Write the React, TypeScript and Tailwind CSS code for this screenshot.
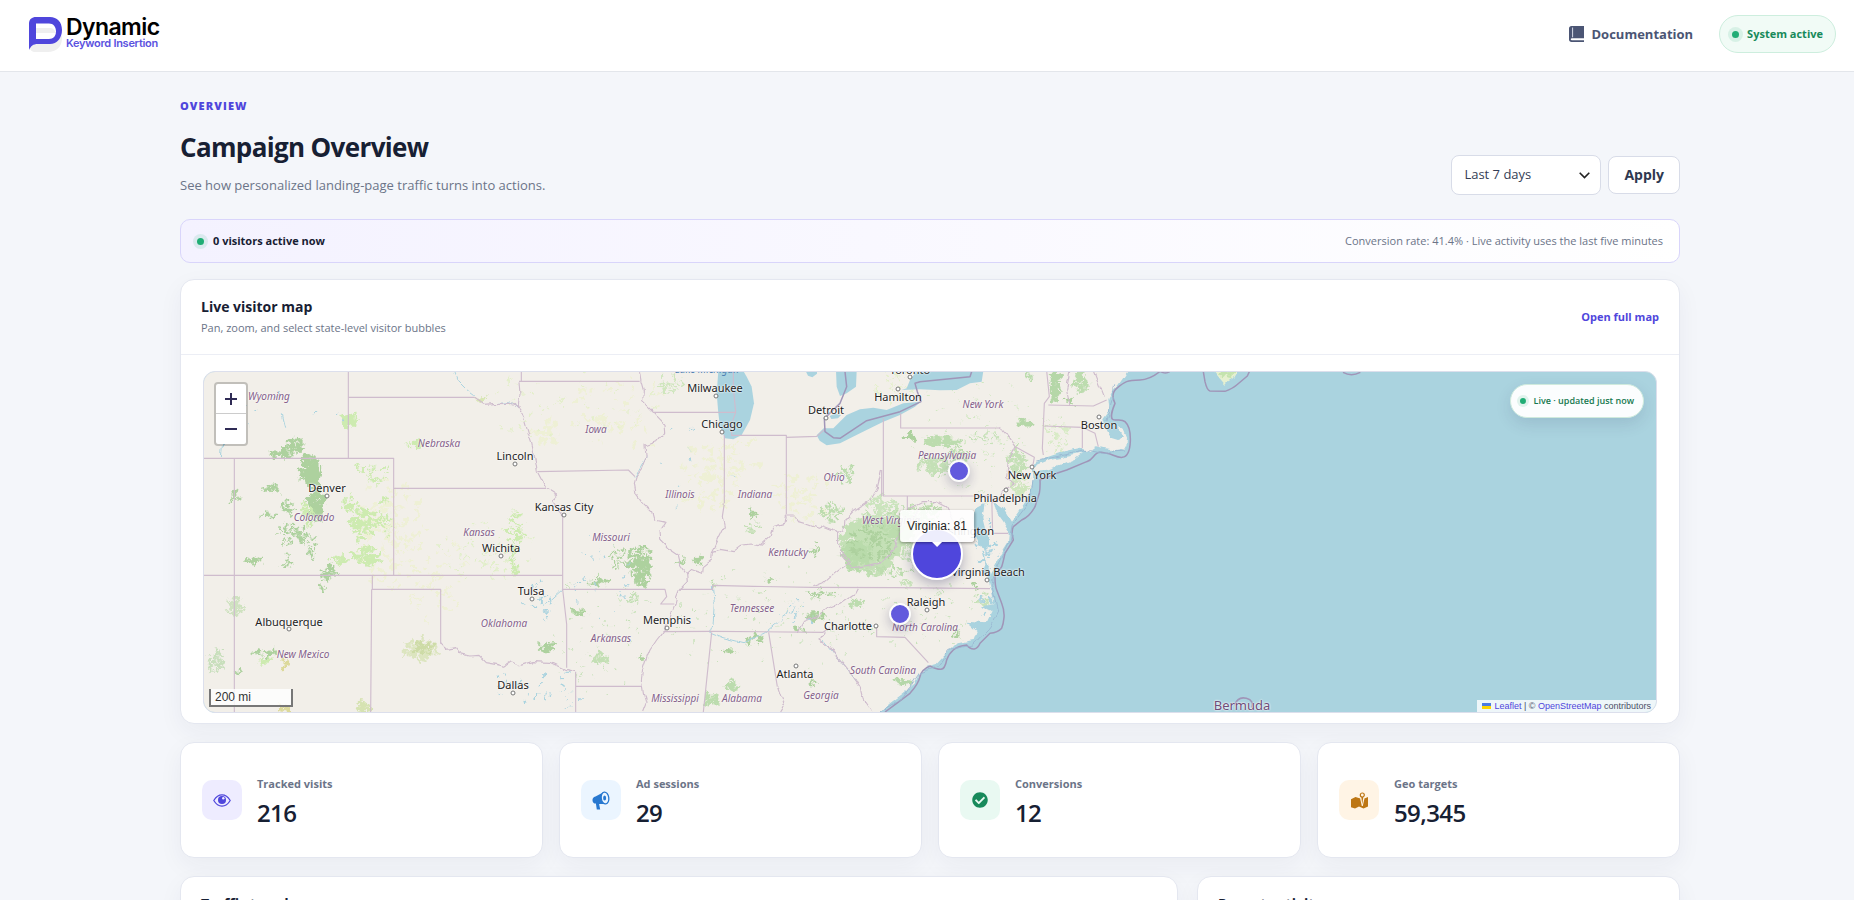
import React, { useState } from 'react';
import { FaCheckCircle } from 'react-icons/fa';

const MAP_WIDTH = 1454;
const MAP_HEIGHT = 342;

const cities = [
  { name: 'Milwaukee', x: 512, y: 17, dx: 513, dy: 25 },
  { name: 'Chicago', x: 519, y: 53, dx: 519, dy: 61 },
  { name: 'Detroit', x: 623, y: 39, dx: 623, dy: 47 },
  { name: 'Hamilton', x: 695, y: 26, dx: 695, dy: 18 },
  { name: 'Toronto', x: 707, y: -1, dx: 707, dy: 6 },
  { name: 'Boston', x: 896, y: 54, dx: 896, dy: 46 },
  { name: 'New York', x: 829, y: 104, dx: 829, dy: 96 },
  { name: 'Philadelphia', x: 802, y: 127, dx: 803, dy: 119 },
  { name: 'Washington', x: 760, y: 160, dx: 759, dy: 149 },
  { name: 'Virginia Beach', x: 785, y: 201, dx: 784, dy: 209 },
  { name: 'Raleigh', x: 723, y: 231, dx: 724, dy: 239 },
  { name: 'Charlotte', x: 645, y: 255, dx: 673, dy: 255 },
  { name: 'Atlanta', x: 592, y: 303, dx: 593, dy: 295 },
  { name: 'Memphis', x: 464, y: 249, dx: 464, dy: 257 },
  { name: 'Dallas', x: 310, y: 314, dx: 310, dy: 322 },
  { name: 'Tulsa', x: 328, y: 220, dx: 329, dy: 228 },
  { name: 'Wichita', x: 298, y: 177, dx: 298, dy: 185 },
  { name: 'Kansas City', x: 361, y: 136, dx: 361, dy: 144 },
  { name: 'Lincoln', x: 312, y: 85, dx: 312, dy: 93 },
  { name: 'Denver', x: 124, y: 117, dx: 124, dy: 125 },
  { name: 'Albuquerque', x: 86, y: 251, dx: 86, dy: 258 },
];

const states = [
  { name: 'Wyoming', x: 66, y: 25 },
  { name: 'Nebraska', x: 236, y: 72 },
  { name: 'Colorado', x: 111, y: 146 },
  { name: 'Kansas', x: 276, y: 161 },
  { name: 'Oklahoma', x: 301, y: 252 },
  { name: 'New Mexico', x: 100, y: 283 },
  { name: 'Iowa', x: 393, y: 58 },
  { name: 'Illinois', x: 477, y: 123 },
  { name: 'Indiana', x: 552, y: 123 },
  { name: 'Ohio', x: 631, y: 106 },
  { name: 'Missouri', x: 408, y: 166 },
  { name: 'Kentucky', x: 585, y: 181 },
  { name: 'Tennessee', x: 549, y: 237 },
  { name: 'Arkansas', x: 408, y: 267 },
  { name: 'Mississippi', x: 472, y: 327 },
  { name: 'Alabama', x: 539, y: 327 },
  { name: 'Georgia', x: 618, y: 324 },
  { name: 'South Carolina', x: 680, y: 299 },
  { name: 'North Carolina', x: 722, y: 256 },
  { name: 'West Virginia', x: 688, y: 149 },
  { name: 'Pennsylvania', x: 744, y: 84 },
  { name: 'New York', x: 780, y: 33 },
];

const markers = [
  { name: 'Virginia', visits: 81, x: 734, y: 183, size: 52, opacity: 1 },
  { name: 'Pennsylvania', visits: 9, x: 756, y: 100, size: 22, opacity: 0.88 },
  { name: 'North Carolina', visits: 8, x: 697, y: 243, size: 22, opacity: 0.88 },
];

const FOREST = '#add19e';
const GRASS = '#cdebb0';
const FARM = '#eef0d5';
const WATER = '#aad3df';

// [cx, cy, rx, ry, count, grain, color], in thirds of a map pixel
type Patch = [number, number, number, number, number, number, string];

const patches: Patch[] = [
  // farmland
  [560, 480, 110, 180, 120, 7, FARM],
  [700, 620, 100, 130, 50, 6, FARM],
  [1250, 130, 150, 120, 40, 7, FARM],
  [1040, 180, 50, 60, 16, 9, FARM],
  [1520, 320, 90, 110, 60, 8, FARM],
  [1800, 380, 90, 80, 40, 7, FARM],
  [1600, 250, 80, 60, 26, 7, FARM],
  [850, 540, 150, 90, 60, 4, '#e0efc8'],
  // mountains, west
  [278, 225, 18, 22, 30, 7, FOREST],
  [240, 245, 34, 14, 26, 6, FOREST],
  [320, 300, 30, 50, 70, 8, FOREST],
  [340, 400, 30, 50, 60, 8, FOREST],
  [205, 355, 30, 14, 20, 5, FOREST],
  [255, 410, 16, 22, 20, 5, FOREST],
  [190, 435, 26, 10, 14, 5, FOREST],
  [270, 490, 56, 30, 40, 5, FOREST],
  [330, 525, 16, 40, 20, 4, FOREST],
  [155, 568, 24, 10, 18, 5, FOREST],
  [255, 570, 22, 16, 14, 4, FOREST],
  [380, 605, 22, 26, 30, 6, FOREST],
  [360, 650, 10, 26, 14, 4, FOREST],
  [100, 372, 18, 16, 16, 5, FOREST],
  [190, 846, 32, 12, 26, 6, FOREST],
  [180, 870, 28, 10, 16, 6, GRASS],
  [40, 870, 30, 34, 36, 6, '#c8dfbc'],
  [108, 900, 6, 10, 6, 5, FOREST],
  [98, 710, 22, 32, 34, 6, '#cfe2c0'],
  [442, 145, 22, 20, 36, 8, GRASS],
  [500, 290, 60, 20, 24, 4, GRASS],
  [525, 320, 34, 26, 24, 4, GRASS],
  [480, 460, 44, 46, 46, 8, GRASS],
  [440, 400, 40, 30, 20, 5, GRASS],
  [490, 560, 40, 30, 50, 7, GRASS],
  [410, 565, 24, 16, 22, 6, GRASS],
  [545, 440, 34, 60, 30, 5, GRASS],
  [310, 430, 20, 40, 18, 6, GRASS],
  [636, 218, 26, 10, 20, 5, GRASS],
  [940, 480, 26, 60, 40, 5, GRASS],
  [930, 570, 16, 36, 18, 5, GRASS],
  [840, 84, 24, 8, 18, 5, '#d8e6b4'],
  [655, 840, 50, 32, 60, 6, '#dce5bf'],
  [660, 830, 26, 20, 30, 5, '#cddba6'],
  [478, 1008, 22, 18, 24, 6, '#d6e3b2'],
  [245, 1012, 24, 8, 14, 5, '#dcd99a'],
  [244, 886, 6, 16, 12, 5, '#dcd99a'],
  [1030, 828, 26, 20, 30, 5, FOREST],
  [1124, 722, 14, 10, 12, 5, FOREST],
  // Ozarks and the lower Mississippi
  [1310, 570, 40, 50, 80, 6, FOREST],
  [1245, 560, 26, 44, 26, 4, FOREST],
  [1315, 622, 24, 24, 30, 6, FOREST],
  [1190, 632, 40, 14, 20, 5, FOREST],
  [1128, 724, 16, 8, 14, 5, FOREST],
  [1192, 865, 26, 20, 28, 5, '#c3dfb4'],
  [1290, 680, 12, 18, 12, 4, '#c3dfb4'],
  [1318, 855, 6, 12, 8, 5, FOREST],
  [1486, 572, 24, 14, 16, 5, FOREST],
  [1435, 575, 14, 20, 10, 4, FOREST],
  [1400, 40, 44, 26, 24, 5, '#cfe6bd'],
  [1650, 425, 12, 20, 16, 5, FOREST],
  [1660, 470, 36, 24, 12, 4, '#c3dfb4'],
  [1885, 420, 44, 24, 40, 5, '#bcdcae'],
  [1930, 310, 26, 26, 16, 6, '#bcdcae'],
  [1578, 838, 12, 7, 14, 5, FOREST],
  [1655, 802, 26, 20, 26, 5, FOREST],
  [1585, 945, 26, 20, 28, 6, '#bcdcae'],
  [1525, 985, 26, 20, 28, 6, '#bcdcae'],
  [1828, 936, 12, 14, 10, 5, FOREST],
  [1840, 735, 30, 8, 24, 5, FOREST],
  [1850, 670, 60, 12, 22, 4, FOREST],
  [1800, 780, 26, 16, 12, 4, FOREST],
  [1700, 630, 8, 6, 8, 5, FOREST],
  [1836, 540, 14, 24, 12, 4, FOREST],
  [1530, 645, 6, 22, 12, 4, '#bcdcae'],
  // Appalachians and the northeast
  [2010, 520, 86, 84, 260, 12, '#c4e0b6'],
  [1960, 555, 40, 44, 70, 8, '#b9dbab'],
  [2010, 500, 80, 70, 70, 6, FOREST],
  [2100, 460, 60, 40, 70, 9, '#bcdcae'],
  [2040, 410, 50, 36, 36, 7, '#cbe4bd'],
  [2160, 425, 54, 26, 44, 6, '#bcdcae'],
  [2215, 213, 54, 14, 50, 7, '#bcdcae'],
  [2195, 280, 50, 30, 56, 7, '#c4e0b6'],
  [2270, 255, 40, 24, 30, 5, '#bcdcae'],
  [2340, 200, 46, 18, 20, 4, '#c8e2ba'],
  [2125, 200, 14, 12, 14, 6, FOREST],
  [2445, 270, 30, 42, 50, 6, '#c4e0b6'],
  [2464, 156, 18, 12, 22, 7, '#b5d7a8'],
  [2555, 50, 16, 46, 40, 7, '#b5d7a8'],
  [2630, 30, 20, 40, 34, 6, '#bcdcae'],
  [2598, 90, 16, 12, 12, 5, FOREST],
  [2472, 8, 12, 22, 14, 5, '#bcdcae'],
  [2560, 200, 46, 50, 34, 4, '#d8ebc6'],
  [2450, 350, 26, 26, 36, 6, '#cfe6bd'],
  [2120, 530, 24, 60, 34, 6, '#c8e2ba'],
  [2060, 600, 80, 16, 30, 5, '#bcdcae'],
  [1966, 695, 26, 16, 26, 6, '#bcdcae'],
  [2110, 640, 30, 16, 12, 4, '#c8e2ba'],
  [2318, 645, 8, 14, 10, 4, FOREST],
  [2340, 680, 22, 20, 14, 5, '#c8e2ba'],
  [2100, 930, 20, 12, 20, 6, '#b5d7a8'],
  [2258, 790, 10, 12, 10, 5, FOREST],
  [2350, 200, 250, 200, 110, 3, '#d0e8c0'],
  [2150, 720, 180, 120, 60, 3, '#c8e2ba'],
  [1700, 760, 300, 180, 90, 3, '#c8e2ba'],
  [1200, 780, 160, 200, 60, 3, '#c8e2ba'],
  [1100, 100, 280, 110, 50, 4, '#e4efcb'],
  [2080, 50, 60, 50, 30, 5, '#e4efcb'],
  // reservoirs
  [1000, 690, 44, 80, 16, 4, WATER],
  [950, 940, 110, 60, 20, 4, WATER],
  [1080, 960, 60, 60, 12, 3, WATER],
  [1250, 660, 160, 120, 14, 3, WATER],
  [1170, 530, 60, 40, 8, 3, WATER],
  [1780, 720, 60, 40, 14, 3, WATER],
  [2380, 700, 60, 50, 30, 5, WATER],
  [2350, 530, 40, 90, 30, 5, WATER],
  [1500, 300, 200, 200, 10, 3, WATER],
  [300, 130, 200, 80, 8, 4, WATER],
];

const stateLines = [
  // plains
  'M436 0V262M436 79H815M955 31V0M948 31H1310',
  'M0 262H572V613M572 352H1029M94 262V1023M0 613H1079M508 613V655H713V818M506 655L503 1023',
  'M1118 902V1023M1119 946H1317M1079 432V655L1091 760V890M1079 655H1386L1391 677 1373 699H1414M1003 302L1276 297 1296 317',
  // midwest
  'M1351 124H1598L1591 47V0M1598 124L1586 157V193H1750V199L1841 196 1869 172M1750 199V429M1564 193V397',
  'M1431 655H1529V643L1651 646 1826 649 2080 650 2361 653M1381 782L1526 781 1860 784 1880 770',
  'M1526 784L1501 1023M1697 784L1723 947M2021 767V797L2106 799 2176 875',
  // east
  'M2041 142V375H2366L2369 487H2416M2093 127V171H2393M2436 227L2494 259 2489 287M2521 252L2518 232 2524 97 2539 77 2531 0',
  'M2524 165L2638 169V232M2638 169L2676 187 2686 227M2536 102L2671 105 2711 87M2036 297V375M2113 375V417',
];

const riverLines = [
  'M815 79L846 100 870 98 920 97 945 106 958 122M948 31L951 69 946 102 961 137 976 187 986 217 999 277 1003 302 1029 352 1061 372 1046 387 1079 432',
  'M713 818L730 835 755 830 770 848 800 855 828 853 850 875 880 880 905 886 925 872 950 884 990 872 1040 874 1085 895 1118 902',
  'M1309 0L1314 32 1321 57 1319 92 1351 124 1383 157 1385 182 1361 212 1326 225 1329 257 1316 292 1301 312 1294 337 1299 367 1321 397 1346 422 1353 447 1386 454 1371 477 1373 507 1396 532 1426 552 1433 582 1451 607 1453 632 1429 657 1421 677 1414 707 1396 757 1381 782 1361 807 1341 837 1329 867 1319 897 1315 927 1321 967 1329 997 1319 1023',
  'M1564 397L1558 437 1564 467 1549 497 1536 527 1528 542 1526 567 1501 587 1499 607 1466 595 1451 609',
  'M1528 542L1551 535 1591 542 1611 527 1641 522 1666 527 1701 497 1711 467 1746 457 1750 432 1771 432 1786 452 1821 462 1846 472 1861 465 1891 477 1901 487 1923 477 1926 447 1951 420 2001 387 2021 357 2036 297',
  'M1901 487V517L1921 547 1941 572 1911 592 1881 617 1861 635 1831 647M1966 647L1956 667 1911 697 1871 712 1841 737 1801 752 1783 784',
  'M1723 947L1743 1007 1733 1023M1861 784L1851 807 1881 827 1901 857 1926 887 1951 917 1971 947 1981 987 2006 1023',
  'M1911 547L1931 572 1951 592 1991 587 2031 577 2071 537 2101 467 2151 417M2113 417L2161 392H2201L2231 407 2251 447 2271 480',
  'M2393 171L2411 192 2436 227 2416 267 2411 317 2436 337 2406 357 2371 392M2601 102L2591 57 2601 0M2701 77L2671 0',
];

// Small fixed generator so that every render draws the same ground cover.
function groundCover([cx, cy, rx, ry, count, grain]: Patch) {
  let seed = cx * 31 + cy * 17 + count;
  const rand = () => {
    seed = (seed * 16807 + 11) % 2147483647;
    return seed / 2147483647;
  };
  rand();
  let d = '';
  for (let i = 0; i < count; i++) {
    const angle = rand() * Math.PI * 2;
    const dist = Math.pow(rand(), 0.7);
    const x = cx + Math.cos(angle) * rx * dist;
    const y = cy + Math.sin(angle) * ry * dist;
    const lean = 0.6 + rand() * 1.1;
    for (let k = 0; k < 7; k++) {
      const a = (k / 7) * Math.PI * 2;
      const r = grain * (0.3 + rand() * 1.3);
      d += `${k ? 'L' : 'M'}${Math.round(x + Math.cos(a) * r * lean)} ${Math.round(y + (Math.sin(a) * r) / lean)}`;
    }
    d += 'Z';
  }
  return d;
}

function BaseMap() {
  return (
    <svg
      className="block"
      width={MAP_WIDTH}
      height={MAP_HEIGHT}
      viewBox={`0 0 ${MAP_WIDTH * 3} ${MAP_HEIGHT * 3}`}
      aria-hidden="true"
    >
      <defs>
        <filter id="ragged" filterUnits="userSpaceOnUse" x="0" y="0" width="4362" height="1026">
          <feTurbulence type="fractalNoise" baseFrequency="0.045" numOctaves="3" seed="4" />
          <feDisplacementMap in="SourceGraphic" scale="34" xChannelSelector="R" yChannelSelector="G" />
        </filter>
        <filter id="meander" filterUnits="userSpaceOnUse" x="-20" y="-20" width="4402" height="1066">
          <feTurbulence type="fractalNoise" baseFrequency="0.035" numOctaves="2" seed="9" />
          <feDisplacementMap in="SourceGraphic" scale="18" xChannelSelector="R" yChannelSelector="G" />
        </filter>
      </defs>

      <rect width={MAP_WIDTH * 3} height={MAP_HEIGHT * 3} fill="#f2efe9" />
      <g filter="url(#ragged)">
        {patches.map((patch, i) => (
          <path key={i} d={groundCover(patch)} fill={patch[6]} />
        ))}
      </g>

      {/* rivers */}
      <g fill="none" stroke={WATER} strokeWidth="3" filter="url(#meander)">
        <path d="M752 0L765 30 790 55 815 74M1528 645L1534 700 1530 760 1520 784 1560 800 1620 815 1680 790 1740 740 1780 710M1296 317L1330 257M870 98L920 95 950 110M1079 655L1040 690 1020 700M60 200L55 260M235 130L245 170M1861 807L1960 930" />
      </g>

      {/* lakes */}
      <g fill={WATER}>
        <path d="M1546 0L1541 67 1546 127 1551 167 1566 202 1591 205 1616 192 1641 147 1653 97 1646 47 1631 17 1621 0Z" />
        <path d="M1808 0L1815 14 1828 19 1842 8V0ZM1899 0L1901 47 1911 75 1931 67 1959 47 1961 0ZM1880 135L1895 128 1914 132 1905 142 1885 144Z" />
        <path d="M1841 193L1862 172 1891 172 1931 132 1971 115 2011 110 2051 117 2101 97 2153 92 2136 107 2091 132 2041 152 1971 187 1911 217 1871 223 1850 209Z" />
        <path d="M2141 0L2121 27 2111 52 2096 57 2151 55 2211 58 2261 57 2301 37 2336 32 2341 0Z" />
      </g>

      {/* Atlantic */}
      <g filter="url(#meander)">
        <path
          fill={WATER}
          d="M4400 -40H2800L2761 20 2746 42 2726 62 2716 82 2719 117 2701 142 2711 177 2726 200 2748 207 2760 196 2752 180 2746 167 2762 176 2772 200 2770 226 2762 240 2740 234 2700 232 2680 226 2660 240 2630 230 2591 239 2531 259 2496 275 2489 292 2491 317 2486 347 2471 387 2441 430 2424 452 2400 412 2371 392 2378 420 2400 450 2418 480 2414 520 2395 550 2380 580 2364 610 2352 575 2340 530 2322 500 2306 450 2318 410 2345 396 2338 440 2348 480 2362 520 2338 540 2348 580 2340 606 2355 620 2366 660 2376 700 2330 706 2366 722 2350 757 2290 752 2321 780 2311 807 2261 817 2221 857 2201 879 2171 887 2146 912 2136 937 2101 967 2061 997 2000 1050H4400Z"
        />
        <path
          fill="#f2efe9"
          d="M2494 287L2540 268 2600 256 2640 246 2620 262 2580 278 2530 296 2500 300ZM2370 532L2392 528 2382 560 2364 590 2356 580ZM2720 232L2745 226 2755 236 2735 240Z"
        />
        <path fill="#e6f0d0" d="M3024 -10H3108L3090 22 3064 38 3050 22Z" />
        <path d={groundCover([3068, 8, 22, 16, 24, 5, FOREST])} fill="#c4e3ae" />
      </g>

      {/* state lines */}
      <g fill="none" stroke="#cfbccd" strokeWidth="3.4" strokeLinejoin="round">
        {stateLines.map((d) => (
          <path key={d} d={d} />
        ))}
        <g filter="url(#meander)">
          {riverLines.map((d) => (
            <path key={d} d={d} />
          ))}
        </g>
      </g>

      {/* maritime and national boundaries */}
      <g fill="none" stroke="#a095b8" strokeWidth="4.500" strokeLinejoin="round">
        <path d="M2870 2Q2840 26 2811 27T2771 32 2741 52 2736 97C2726 120 2722 142 2730 146S2755 142 2766 152 2783 180 2782 210 2775 257 2758 259 2725 247 2711 247 2694 238 2681 247 2670 266 2651 272L2591 297 2561 307 2511 327Q2512 350 2509 367L2496 407Q2480 437 2456 447L2431 467Q2424 480 2431 507L2406 547Q2400 575 2396 587L2376 617Q2376 645 2381 657L2396 697Q2405 720 2403 740T2396 772Q2385 785 2361 787L2331 817Q2325 832 2314 834T2291 822Q2265 825 2251 837T2231 867Q2226 894 2214 895T2181 885Q2156 895 2151 917T2121 967L2081 997 2046 1023" />
        <path d="M2306 2L2301 17 2151 32 2136 37 2143 62 2154 92 2091 122 1991 149 1911 202 1891 200 1866 182 1864 142 1911 97 1931 47 1926 2" />
        <path d="M3001 2L3006 32Q3012 58 3021 60L3066 61Q3090 52 3101 42L3133 15 3139 2M3420 4Q3445 18 3472 4M2872 2Q2888 10 2900 2M3094 1003Q3105 975 3130 982T3145 1010" />
      </g>
      <g fill="none" stroke="#98b5d0" strokeWidth="2.500" strokeLinejoin="round" filter="url(#meander)">
        <path d="M2490 330L2478 395 2432 455 2420 515 2380 595 2366 640 2384 720 2360 768 2310 822 2240 835 2205 888 2150 905 2100 980 2030 1023M2500 270L2660 236 2700 244 2768 240M2735 40L2722 110 2712 150" />
      </g>
    </svg>
  );
}

function LiveDot({ small = false }: { small?: boolean }) {
  return (
    <span
      className={`shrink-0 rounded-full bg-[#20ad75] ${
        small ? 'h-1.5 w-1.5 ring-3 ring-[#20ad75]/12' : 'h-[7px] w-[7px] ring-4 ring-[#20ad75]/12'
      }`}
    />
  );
}

function LogoMark() {
  return (
    <svg width="34" height="36" viewBox="0 0 34 36" aria-hidden="true">
      <path d="M1 31c2-3 4-4 9-4h8c8 0 13-4 15-9v3c0 9-6 14-14 14H6c-3 0-5-2-5-4Z" fill="#efefef" />
      <path d="M7 11h14c3 0 5 2 6 5H7Z" fill="#efefef" />
      <path
        fillRule="evenodd"
        fill="#4f46dc"
        d="M7 0h14c7 0 12 5 12 13s-5 14-12 14H9c-5 0-7 2-9 6V7c0-5 3-7 7-7Zm0 6.500V22h13c4.500 0 7-3 7-7.500s-2.500-8-7-8Z"
      />
    </svg>
  );
}

function BookIcon() {
  return (
    <svg width="15" height="16" viewBox="0 0 15 16" aria-hidden="true">
      <path d="M2.500 0H15v12.300H3c-1.700 0-1.700 2 0 2H15V16H2.500C1 16 0 15 0 13.500v-11C0 1 1 0 2.500 0Z" fill="#4b5574" />
      <path d="M3.600 1.500v9.800" stroke="#d5d9e6" strokeWidth="1" />
    </svg>
  );
}

function EyeIcon() {
  return (
    <svg width="18" height="13" viewBox="0 0 18 13" aria-hidden="true">
      <path d="M.8 6.500C3 2.800 5.800.9 9 .9s6 1.900 8.200 5.600C15 10.200 12.200 12.100 9 12.100S3 10.200.8 6.500Z" fill="none" stroke="#4f46dc" strokeWidth="1.200" />
      <circle cx="9" cy="6" r="4" fill="#4f46dc" />
      <circle cx="10.300" cy="4.300" r="1.200" fill="#eeecff" />
    </svg>
  );
}

function MegaphoneIcon() {
  return (
    <svg width="18" height="19" viewBox="0 0 18 19" aria-hidden="true">
      <path d="M11 1.500 3.500 5.600C1.300 6.200.4 7.600.5 9.400c.1 2 1.400 3.200 3.400 3.100l.9 5.900h3.400l-1.100-5.500 6 .2Z" fill="#2878d0" />
      <ellipse cx="13" cy="7" rx="3.800" ry="6" fill="#ebf5ff" stroke="#2878d0" strokeWidth="1.300" transform="rotate(-8 13 7)" />
      <ellipse cx="12.600" cy="7" rx="1.500" ry="2.500" fill="#2878d0" />
    </svg>
  );
}

function MapPinIcon() {
  return (
    <svg width="17" height="17" viewBox="0 0 17 17" aria-hidden="true">
      <path d="M0 7.200 4.500 5l4 1.300H14L17 5v9.500l-4.500 2-4.500-2-4 2-4-1.200Z" fill="#bd7614" />
      <path d="M8.800 5h5l-2 9h-1Z" fill="#fff4e5" />
      <path d="M10.300 5h2l-1 7.500Z" fill="#bd7614" />
      <circle cx="11.300" cy="3" r="2" fill="#fff4e5" stroke="#bd7614" strokeWidth="1.200" />
    </svg>
  );
}

const stats = [
  { label: 'Tracked visits', value: '216', tile: 'bg-[#eeecff]', icon: <EyeIcon /> },
  { label: 'Ad sessions', value: '29', tile: 'bg-[#ebf5ff]', icon: <MegaphoneIcon /> },
  { label: 'Conversions', value: '12', tile: 'bg-[#e9f9f2]', icon: <FaCheckCircle className="h-4 w-4 text-[#178a5b]" /> },
  { label: 'Geo targets', value: '59,345', tile: 'bg-[#fff4e5]', icon: <MapPinIcon /> },
];

const card = 'rounded-[14px] border border-[#e4e7f0] bg-white shadow-[0_8px_24px_rgba(30,35,80,0.05)]';

function VisitorMap() {
  const [selected, setSelected] = useState('Virginia');

  return (
    <div className="relative flex h-[342px] justify-center overflow-hidden rounded-xl border border-[#dcdfec] bg-[#aad3df]">
      <div className="relative -m-px shrink-0">
        <BaseMap />

        {states.map((s) => (
          <span
            key={`${s.name}-${s.x}`}
            style={{ left: s.x, top: s.y }}
            className="absolute -translate-x-1/2 -translate-y-1/2 whitespace-nowrap font-['Noto_Sans',sans-serif] text-[10px] leading-3 text-[#845f8a] italic [text-shadow:0_0_2px_#fff,0_0_2px_#fff]"
          >
            {s.name}
          </span>
        ))}
        {cities.map((c) => (
          <React.Fragment key={c.name}>
            <span
              style={{ left: c.dx, top: c.dy }}
              className="absolute h-[5px] w-[5px] -translate-x-1/2 -translate-y-1/2 rounded-full border border-[#777] bg-white"
            />
            <span
              style={{ left: c.x, top: c.y }}
              className="absolute -translate-x-1/2 -translate-y-1/2 whitespace-nowrap font-['Noto_Sans',sans-serif] text-[11px] leading-3 text-[#222] [text-shadow:0_0_2px_#fff,0_0_2px_#fff]"
            >
              {c.name}
            </span>
          </React.Fragment>
        ))}
        <span
          style={{ left: 504, top: -2 }}
          className="absolute -translate-x-1/2 -translate-y-1/2 whitespace-nowrap font-['Noto_Sans',sans-serif] text-[10px] leading-3 text-[#4d80b3] italic"
        >
          Lake Michigan
        </span>
        <span
          style={{ left: 1039, top: 334 }}
          className="absolute -translate-x-1/2 -translate-y-1/2 font-['Noto_Sans',sans-serif] text-[13px] leading-4 text-[#6f4c78] [text-shadow:0_0_2px_#fff,0_0_2px_#fff]"
        >
          Bermuda
        </span>

        {markers.map((m) => (
          <button
            key={m.name}
            type="button"
            aria-label={`${m.name}: ${m.visits}`}
            onClick={() => setSelected(m.name)}
            style={{ left: m.x, top: m.y, width: m.size, height: m.size, opacity: m.opacity }}
            className="absolute -translate-x-1/2 -translate-y-1/2 rounded-full border-2 border-white bg-[#4f46dc] shadow-[0_4px_12px_rgba(30,27,90,0.3)]"
          />
        ))}
        {markers
          .filter((m) => m.name === selected)
          .map((m) => (
            <div
              key={m.name}
              role="tooltip"
              style={{ left: m.x, top: m.y - 12 }}
              className="absolute flex -translate-x-1/2 -translate-y-full flex-col items-center"
            >
              <span className="rounded-[3px] bg-white/90 px-[7px] py-[7px] font-['Liberation_Sans',Arial,sans-serif] text-xs leading-[18px] whitespace-nowrap text-[#222] shadow-[0_1px_3px_rgba(0,0,0,0.4)]">
                {m.name}: {m.visits}
              </span>
              <span className="absolute top-full h-0 w-0 border-x-[5px] border-t-[5px] border-x-transparent border-t-white" />
            </div>
          ))}
      </div>

      <div className="absolute top-2.5 left-2.5 overflow-hidden rounded border-2 border-black/20 bg-white bg-clip-padding">
        <button type="button" aria-label="Zoom in" className="flex h-[30px] w-[30px] items-center justify-center border-b border-[#ccc]">
          <svg width="12" height="12" viewBox="0 0 12 12" stroke="#2f2b55" strokeWidth="2" aria-hidden="true">
            <path d="M6 0v12M0 6h12" />
          </svg>
        </button>
        <button type="button" aria-label="Zoom out" className="flex h-[30px] w-[30px] items-center justify-center">
          <svg width="12" height="12" viewBox="0 0 12 12" stroke="#2f2b55" strokeWidth="2" aria-hidden="true">
            <path d="M0 6h12" />
          </svg>
        </button>
      </div>

      <div className="absolute bottom-[5px] left-[5px] w-[84px] border-2 border-t-0 border-[#777] bg-white/80 px-1 font-['Liberation_Sans',Arial,sans-serif] text-xs leading-4 text-[#333]">
        200 mi
      </div>

      <div className="absolute top-3 right-3 flex items-center gap-2 rounded-full border border-[#cfeadd] bg-white/95 px-[9px] py-2 text-[9px] leading-4 font-semibold text-[#16794f] shadow-[0_6px_16px_rgba(30,40,80,0.12)]">
        <LiveDot small />
        Live · updated just now
      </div>

      <div className="absolute right-0 bottom-0 flex items-center gap-[3px] bg-white/80 px-[5px] font-['Liberation_Sans',Arial,sans-serif] text-[9px] leading-3 text-[#4b5068]">
        <svg width="9" height="6" viewBox="0 0 9 6" aria-hidden="true">
          <path fill="#4c7be1" d="M0 0h9v3H0z" />
          <path fill="#ffd500" d="M0 3h9v3H0z" />
        </svg>
        <span>
          <a href="#leaflet" className="text-[#4f46dc]">Leaflet</a> | ©{' '}
          <a href="#openstreetmap" className="text-[#4f46dc]">OpenStreetMap</a> contributors
        </span>
      </div>
    </div>
  );
}

export default function App() {
  const [range, setRange] = useState('7');

  return (
    <div className="h-screen overflow-hidden bg-[#f4f6fa] font-['Open_Sans','Noto_Sans',sans-serif] text-[#172033]">
      <header className="flex h-[72px] items-start justify-between border-b border-[#e3e6eb] bg-white pr-[18px] pl-[29px]">
        <a href="#home" className="mt-[17px] flex gap-[3px]">
          <LogoMark />
          <span className="flex flex-col font-['Inter',sans-serif]">
            <span className="text-[23px] leading-5 font-semibold tracking-tight text-black">Dynamic</span>
            <span className="text-[11px] leading-3 font-semibold tracking-tight text-[#5b52e0]">Keyword Insertion</span>
          </span>
        </a>
        <div className="mt-[15px] flex items-center gap-[26px]">
          <a href="#documentation" className="flex items-center gap-2 text-[13px] leading-5 font-bold text-[#4b5574]">
            <BookIcon />
            Documentation
          </a>
          <span className="flex items-center gap-2 rounded-full border border-[#cdeede] bg-[#f1fbf6] px-3 py-2 text-[11px] leading-5 font-bold text-[#178a5b]">
            <LiveDot />
            System active
          </span>
        </div>
      </header>

      <main className="pl-1.5">
        <div className="mx-auto flex max-w-[1500px] flex-col pt-6">
          <div className="mb-6 flex items-end justify-between">
            <div>
              <p className="text-[11px] leading-5 font-extrabold tracking-widest text-[#4f46dc]">OVERVIEW</p>
              <h1 className="mt-[13px] text-[26px] leading-9 font-bold tracking-tight">Campaign Overview</h1>
              <p className="mt-2.5 text-[13px] leading-5 text-[#6b7488]">
                See how personalized landing-page traffic turns into actions.
              </p>
            </div>
            <form className="flex items-center gap-[7px]" onSubmit={(e) => e.preventDefault()}>
              <div className="relative">
                <select
                  aria-label="Date range"
                  value={range}
                  onChange={(e) => setRange(e.target.value)}
                  className="h-10 w-[150px] appearance-none rounded-lg border border-[#d8dce8] bg-white px-3 text-[13px] font-medium text-[#343d55]"
                >
                  <option value="7">Last 7 days</option>
                  <option value="30">Last 30 days</option>
                  <option value="90">Last 90 days</option>
                </select>
                <svg
                  className="pointer-events-none absolute top-[17px] right-[11px]"
                  width="11"
                  height="7"
                  viewBox="0 0 11 7"
                  fill="none"
                  stroke="#222"
                  strokeWidth="1.6"
                  aria-hidden="true"
                >
                  <path d="m.7.700 4.800 4.800L10.300.7" />
                </svg>
              </div>
              <button type="submit" className="h-[38px] rounded-lg border border-[#d8dce8] bg-white px-[15px] text-sm font-bold text-[#2f3850]">
                Apply
              </button>
            </form>
          </div>

          <div className="mb-4 flex items-center justify-between rounded-[10px] border border-[#d9d5fb] bg-linear-to-r from-[#f4f2ff] to-white px-4 py-3 text-[11px] leading-[18px]">
            <span className="flex items-center gap-[9px] font-bold">
              <LiveDot />0 visitors active now
            </span>
            <span className="text-[#6b7488]">Conversion rate: 41.4% · Live activity uses the last five minutes</span>
          </div>

          <div className="flex flex-col gap-[18px]">
            <section className={card}>
              <div className="flex items-center justify-between border-b border-[#eceef5] px-5 py-4">
                <div>
                  <h2 className="text-sm leading-[22px] font-bold">Live visitor map</h2>
                  <p className="text-[11px] leading-5 text-[#6b7488]">Pan, zoom, and select state-level visitor bubbles</p>
                </div>
                <a href="#map" className="text-[11px] leading-5 font-bold text-[#4f46dc]">
                  Open full map
                </a>
              </div>
              <div className="px-[22px] pt-4 pb-2.5">
                <VisitorMap />
              </div>
            </section>

            <section className="grid grid-cols-4 gap-4">
              {stats.map((stat) => (
                <div key={stat.label} className={`flex items-center gap-[15px] px-[21px] py-7 ${card}`}>
                  <div className={`flex h-10 w-10 shrink-0 items-center justify-center rounded-[10px] ${stat.tile}`}>
                    {stat.icon}
                  </div>
                  <div className="pt-1">
                    <div className="text-[11px] leading-[18px] font-bold text-[#6b7488]">{stat.label}</div>
                    <div className="mt-1 text-2xl leading-8 font-semibold tracking-tight">{stat.value}</div>
                  </div>
                </div>
              ))}
            </section>

            <section className="grid grid-cols-[31fr_15fr] gap-[19px]">
              {['Traffic trend', 'Recent activity'].map((title) => (
                <div key={title} className={`px-5 py-4 ${card}`}>
                  <h2 className="text-sm leading-[22px] font-bold">{title}</h2>
                </div>
              ))}
            </section>
          </div>
        </div>
      </main>
    </div>
  );
}
